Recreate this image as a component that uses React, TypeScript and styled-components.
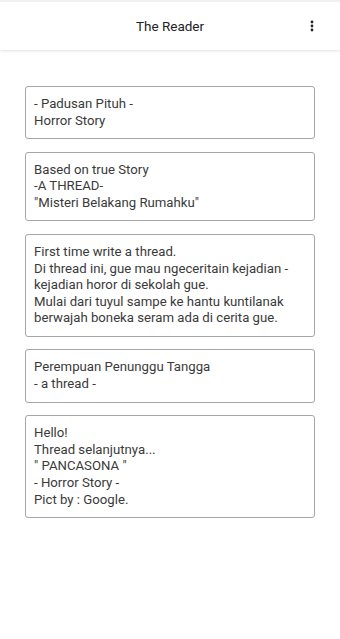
import styled, { createGlobalStyle } from 'styled-components';

const GlobalStyle = createGlobalStyle`
    html, body {
        margin: 0;
        padding: 0;
        background: #ffffff;
    }

    body {
        font-family: Roboto, 'Noto Sans', sans-serif;
        color: #333333;
    }
`;

const Page = styled.div`
    width: 340px;
    min-height: 639px;
    background: #fff;
`;

const Header = styled.header`
    height: 50px;
    display: flex;
    align-items: center;
    justify-content: center;
    position: relative;
    background: #fff;
    border-top: 2px solid #f0f0f0;
    box-sizing: border-box;
    box-shadow: 0 1px 3px rgba(0, 0, 0, 0.12);
`;

const Title = styled.h1`
    margin: 0;
    font-size: 13.5px;
    font-weight: 400;
    color: #222;
`;

const MenuButton = styled.button`
    position: absolute;
    right: 20px;
    top: 50%;
    transform: translateY(-50%);
    border: none;
    background: none;
    padding: 0;
    width: 16px;
    height: 20px;
    display: flex;
    align-items: center;
    justify-content: center;
    color: #222;
`;

const List = styled.ul`
    list-style: none;
    margin: 0;
    padding: 36px 25px 0;

    display: flex;
    flex-direction: column;
    gap: 12.5px;
`;

const Card = styled.li`
    border: 1px solid #a6a6a6;
    border-radius: 3px;
    padding: 9px 4px 9px 8px;
    font-size: 13.2px;
    line-height: 16.6px;
    color: #3a3a3a;
    white-space: pre-line;
`;

const posts = [
    '- Padusan Pituh -\nHorror Story',
    'Based on true Story\n-A THREAD-\n"Misteri Belakang Rumahku"',
    'First time write a thread.\nDi thread ini, gue mau ngeceritain kejadian - kejadian horor di sekolah gue.\nMulai dari tuyul sampe ke hantu kuntilanak berwajah boneka seram ada di cerita gue.',
    'Perempuan Penunggu Tangga\n- a thread -',
    'Hello!\nThread selanjutnya...\n" PANCASONA "\n- Horror Story -\nPict by : Google.',
];

const App = () => {
    return (
        <Page>
            <GlobalStyle />
            <Header>
                <Title>The Reader</Title>
                <MenuButton aria-label="Menu">
                    <svg width="4" height="12" viewBox="0 0 4 12">
                        <circle cx="2" cy="2" r="1.4" fill="currentColor" />
                        <circle cx="2" cy="6" r="1.4" fill="currentColor" />
                        <circle cx="2" cy="10" r="1.4" fill="currentColor" />
                    </svg>
                </MenuButton>
            </Header>
            <List>
                {posts.map((text, i) => (
                    <Card key={i}>{text}</Card>
                ))}
            </List>
        </Page>
    );
};

export default App;
